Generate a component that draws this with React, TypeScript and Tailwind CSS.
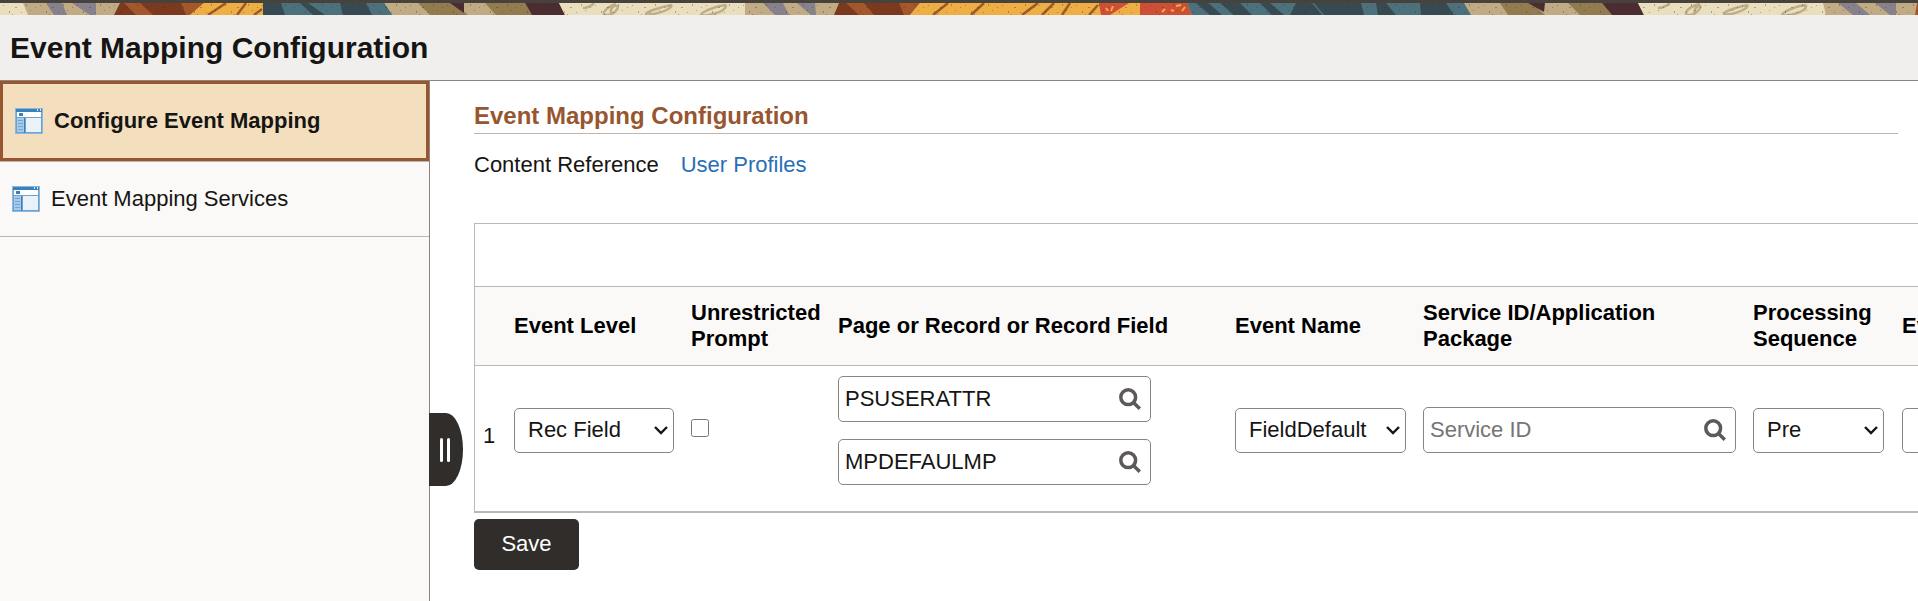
import { useState } from 'react'
import clsx from 'clsx'

type Shape = [fill: string, points: string]

const BANNER: Shape[] = [
	['#c0ab85', '0,0 1918,0 1918,12 0,12'],
	['#e9dfbf', '0,0 23,0 28,12 0,12'],
	['#86818a', '46,0 62,0 67,12 54,12'],
	['#86818a', '72,0 96,0 96,12 90,12'],
	['#7b3a1f', '120,0 196,0 190,12 114,12'],
	['#a4572b', '124,0 140,0 153,12 136,12'],
	['#a4572b', '181,0 204,0 190,12 186,12'],
	['#eeae43', '204,0 263,0 263,12 190,12'],
	['#384a51', '263,0 384,0 392,12 263,12'],
	['#4d707d', '281,0 300,0 313,12 285,12'],
	['#4d707d', '308,0 340,0 343,12 325,12'],
	['#4d707d', '366,0 384,0 392,12 372,12'],
	['#937b50', '418,0 452,0 468,12 430,12'],
	['#4b2c31', '450,0 464,0 464,10'],
	['#937b50', '485,0 525,0 532,12 496,12'],
	['#4b2c31', '525,0 559,0 565,12 532,12'],
	['#e9dfbf', '559,0 745,0 745,12 565,12'],
	['#86818a', '763,0 783,0 789,12 775,12'],
	['#86818a', '797,0 815,0 816,12 811,12'],
	['#7b3a1f', '839,0 912,0 910,12 834,12'],
	['#a4572b', '846,0 864,0 874,12 859,12'],
	['#a4572b', '899,0 920,0 910,12 904,12'],
	['#eeae43', '920,0 1140,0 1141,12 910,12'],
	['#cf4f36', '1099,0 1129,0 1110,12 1101,12'],
	['#cf4f36', '1140,0 1187,0 1192,12 1140,12'],
	['#4d707d', '1187,0 1464,0 1471,12 1192,12'],
	['#384a51', '1196,0 1208,0 1222,12 1210,12'],
	['#384a51', '1220,0 1240,0 1252,12 1234,12'],
	['#384a51', '1260,0 1270,0 1284,12 1272,12'],
	['#384a51', '1296,0 1312,0 1322,12 1290,12'],
	['#384a51', '1314,0 1361,0 1364,12 1324,12'],
	['#384a51', '1376,0 1386,0 1396,12 1378,12'],
	['#384a51', '1420,0 1446,0 1454,12 1421,12'],
	['#937b50', '1500,0 1532,0 1545,12 1508,12'],
	['#4b2c31', '1528,0 1545,0 1544,9'],
	['#937b50', '1568,0 1602,0 1612,12 1580,12'],
	['#4b2c31', '1602,0 1638,0 1644,12 1612,12'],
	['#e9dfbf', '1638,0 1823,0 1826,12 1644,12'],
	['#86818a', '1838,0 1856,0 1870,12 1853,12'],
	['#86818a', '1875,0 1896,0 1896,12 1890,12'],
	['#a4572b', '1917,0 1918,0 1918,12 1915,12'],
]

const BRUSH_STROKES = [
	'M226 0l-18 12M246 0l-9 12M262 6l-8 6',
	'M948 0l-15 12M984 0l-13 12M1038 0l-16 12M1054 0l-12 12M1070 0l-8 12M1098 2l-9 10',
]

const SCRIBBLES =
	'M594 0q-5 5-11 5M616 1c-12 4-16 12-8 11s14-11 6-9q-5 3-2 9M672 2c-12 2-26 7-26 9s24-2 26-9M726 2c-12 1-26 8-25 10s26-2 25-10M1670 0q-6 5-12 5M1700 1c-14 3-18 12-10 11s14-11 8-9q-5 3-3 9M1748 2c-12 2-25 7-24 9s22-2 24-9M1806 2c-12 1-24 8-24 10s26-2 24-10'

function Banner() {
	return (
		<div className="border-t-3 border-[#48423d]">
			<svg
				className="block h-3 w-full"
				viewBox="0 0 1918 12"
				preserveAspectRatio="xMinYMin slice"
				aria-hidden="true"
			>
				<defs>
					<pattern id="grain" width="37" height="12" patternUnits="userSpaceOnUse">
						<path
							d="M3 2h1v1h-1zM9 8h1v2h-1zM15 4h2v1h-2zM21 9h1v1h-1zM26 1h1v2h-1zM30 7h1v1h-1zM35 4h1v1h-1zM12 11h1v1h-1z"
							fill="#3a2b20"
							opacity=".35"
						/>
					</pattern>
				</defs>
				{BANNER.map(([fill, points]) => (
					<polygon key={points} fill={fill} points={points} />
				))}
				{BRUSH_STROKES.map((d) => (
					<path key={d} d={d} stroke="#9c5a28" strokeWidth="2.5" fill="none" />
				))}
				<path d={SCRIBBLES} stroke="#bfae84" strokeWidth="2.5" fill="none" />
				<path
					d="M1106 5l2 3M1113 3l-2 5M1162 9l3-3M1171 7l3 1M1176 3l5-1M1182 8l3-4"
					stroke="#eeae43"
					strokeWidth="2"
				/>
				<rect width="1918" height="12" fill="url(#grain)" />
			</svg>
		</div>
	)
}

function PageIcon() {
	return (
		<svg
			className="h-[26px] w-7 shrink-0"
			viewBox="0 0 28 26"
			shapeRendering="crispEdges"
			aria-hidden="true"
		>
			<rect width="28" height="26" fill="#8db8dc" />
			<rect x="1" y="1" width="26" height="24" fill="#6ba3d0" />
			<rect x="1" y="1" width="26" height="3" fill="#3a80bd" />
			<path d="M22 1h1v2h-1zM25 1h1v2h-1z" fill="#dcebf6" />
			<rect x="2" y="4" width="24" height="5" fill="#fff" />
			<rect x="4" y="5" width="4" height="3" fill="#3a80bd" />
			<rect x="2" y="10" width="7" height="14" fill="#a9cae6" />
			<path
				d="M3 12h5v1h-5zM3 15h5v1h-5zM3 18h5v1h-5zM3 21h5v1h-5z"
				fill="#6fa6d3"
			/>
			<rect x="9" y="10" width="1" height="15" fill="#3a80bd" />
			<rect x="11" y="10" width="15" height="14" fill="#e9f1f9" />
		</svg>
	)
}

function Sidebar() {
	return (
		<nav className="relative w-[430px] shrink-0 border-r border-[#8b8580] bg-[#fbf9f8]">
			<ul>
				<li className="border-b border-[#bbb7b3]">
					<a
						href="#configure"
						aria-current="page"
						className="flex h-20 items-center gap-[11px] border-3 border-[#97562f] bg-[#f3dfbd] pl-3 font-bold"
					>
						<PageIcon />
						Configure Event Mapping
					</a>
				</li>
				<li className="border-b border-[#bbb7b3]">
					<a
						href="#services"
						className="flex h-[74px] items-center gap-[11px] pl-3"
					>
						<PageIcon />
						Event Mapping Services
					</a>
				</li>
			</ul>
			{/* collapse handle, hangs over the main panel */}
			<button
				type="button"
				aria-label="Collapse side panel"
				className="absolute top-[332px] left-full z-10 flex h-[73px] w-[34px] items-center gap-1 rounded-r-[50%] bg-[#312d2a] pl-[11px]"
			>
				<span className="h-6 w-[3px] rounded-full bg-white" />
				<span className="h-6 w-[3px] rounded-full bg-white" />
			</button>
		</nav>
	)
}

interface LookupProps {
	label: string
	defaultValue?: string
	placeholder?: string
}

function Lookup({ label, defaultValue, placeholder }: LookupProps) {
	return (
		<div className="flex h-[46px] w-[313px] items-center rounded-[5px] border border-[#8b8580] bg-white pr-[9px]">
			<input
				type="text"
				aria-label={label}
				defaultValue={defaultValue}
				placeholder={placeholder}
				className="h-full min-w-0 flex-1 pl-[6px] outline-none placeholder:text-[#757575]"
			/>
			<button type="button" aria-label={`Look up ${label}`}>
				<svg className="size-[22px]" viewBox="0 0 22 22" fill="none" stroke="#5c5958">
					<circle cx="9.2" cy="9.2" r="7.4" strokeWidth="3.5" />
					<path d="M14.5 14.5l6.3 6.3" strokeWidth="3.4" />
				</svg>
			</button>
		</div>
	)
}

interface PickerProps {
	label: string
	options: string[]
	className?: string
}

function Picker({ label, options, className }: PickerProps) {
	return (
		<div className={clsx('relative', className)}>
			<select
				aria-label={label}
				className="block h-[45px] w-full appearance-none rounded-[5px] border border-[#8b8580] bg-white pl-[13px]"
			>
				{options.map((option) => (
					<option key={option}>{option}</option>
				))}
			</select>
			<svg
				className="pointer-events-none absolute top-[18px] right-[6px] h-[9px] w-[14px]"
				viewBox="0 0 14 9"
				fill="none"
				stroke="#161513"
				strokeWidth="2.4"
				aria-hidden="true"
			>
				<path d="M1 1l6 6 6-6" />
			</svg>
		</div>
	)
}

const COLUMNS = [
	{ label: '', width: 'w-[31px]' },
	{ label: 'Event Level', width: 'w-[177px]' },
	{ label: 'Unrestricted Prompt', width: 'w-[147px]' },
	{ label: 'Page or Record or Record Field', width: 'w-[397px]' },
	{ label: 'Event Name', width: 'w-[188px]' },
	{ label: 'Service ID/Application Package', width: 'w-[330px]' },
	{ label: 'Processing Sequence', width: 'w-[149px]' },
	{ label: 'Event', width: 'w-[280px]' },
]

function MappingTable() {
	const [unrestricted, setUnrestricted] = useState(false)

	return (
		<div className="w-max border border-b-2 border-[#bbb7b3]">
			<div className="h-[62px]" />
			<table className="w-[1699px] table-fixed">
				<thead className="border-y border-[#bbb7b3] bg-[#fbf9f8] text-black">
					<tr className="h-[79px]">
						{COLUMNS.map(({ label, width }) => (
							<th
								key={label}
								scope="col"
								className={clsx('pl-2 text-left leading-[26px] font-bold', width)}
							>
								{label}
							</th>
						))}
					</tr>
				</thead>
				<tbody>
					<tr className="h-[145px]">
						<td className="pb-1 pl-2">1</td>
						<td className="pb-4 pl-2">
							<Picker
								label="Event Level"
								options={['Rec Field', 'Record', 'Component']}
								className="w-40"
							/>
						</td>
						<td className="pb-5 pl-2">
							<input
								type="checkbox"
								aria-label="Unrestricted Prompt"
								checked={unrestricted}
								onChange={(e) => setUnrestricted(e.target.checked)}
								className="block size-[18px]"
							/>
						</td>
						<td className="pb-4 pl-2">
							<div className="space-y-[17px]">
								<Lookup label="Record" defaultValue="PSUSERATTR" />
								<Lookup label="Record Field" defaultValue="MPDEFAULMP" />
							</div>
						</td>
						<td className="pb-4 pl-2">
							<Picker
								label="Event Name"
								options={['FieldDefault', 'FieldEdit']}
								className="w-[171px]"
							/>
						</td>
						<td className="pb-4 pl-2">
							<Lookup label="Service ID" placeholder="Service ID" />
						</td>
						<td className="pb-4 pl-2">
							<Picker
								label="Processing Sequence"
								options={['Pre', 'Post']}
								className="w-[131px]"
							/>
						</td>
						<td className="pb-4 pl-2">
							<Picker label="Event" options={['']} className="w-40" />
						</td>
					</tr>
				</tbody>
			</table>
		</div>
	)
}

export default function App() {
	return (
		<div className="flex min-h-screen flex-col overflow-hidden bg-white font-['Liberation_Sans',Arial,sans-serif] text-[22px] leading-[26px] text-[#161513]">
			<Banner />
			<header className="flex h-[66px] items-center border-b border-[#8b8580] bg-[#f0efed] pl-[10px]">
				<h1 className="text-[30px] font-bold">Event Mapping Configuration</h1>
			</header>
			<div className="flex flex-1">
				<Sidebar />
				<main className="min-w-0 flex-1 overflow-hidden pl-11">
					<h2 className="mr-5 border-b border-[#bbb7b3] pt-[22px] pb-1 text-2xl leading-[26px] font-bold text-[#97562f]">
						Event Mapping Configuration
					</h2>
					<p className="mt-[18px] mb-[45px] flex gap-[22px]">
						<span>Content Reference</span>
						<a href="#profiles" className="text-[#2a6fb5] hover:underline">
							User Profiles
						</a>
					</p>
					<MappingTable />
					<button
						type="button"
						className="mt-[6px] h-[51px] w-[105px] rounded-[5px] bg-[#312d2a] text-white"
					>
						Save
					</button>
				</main>
			</div>
		</div>
	)
}
